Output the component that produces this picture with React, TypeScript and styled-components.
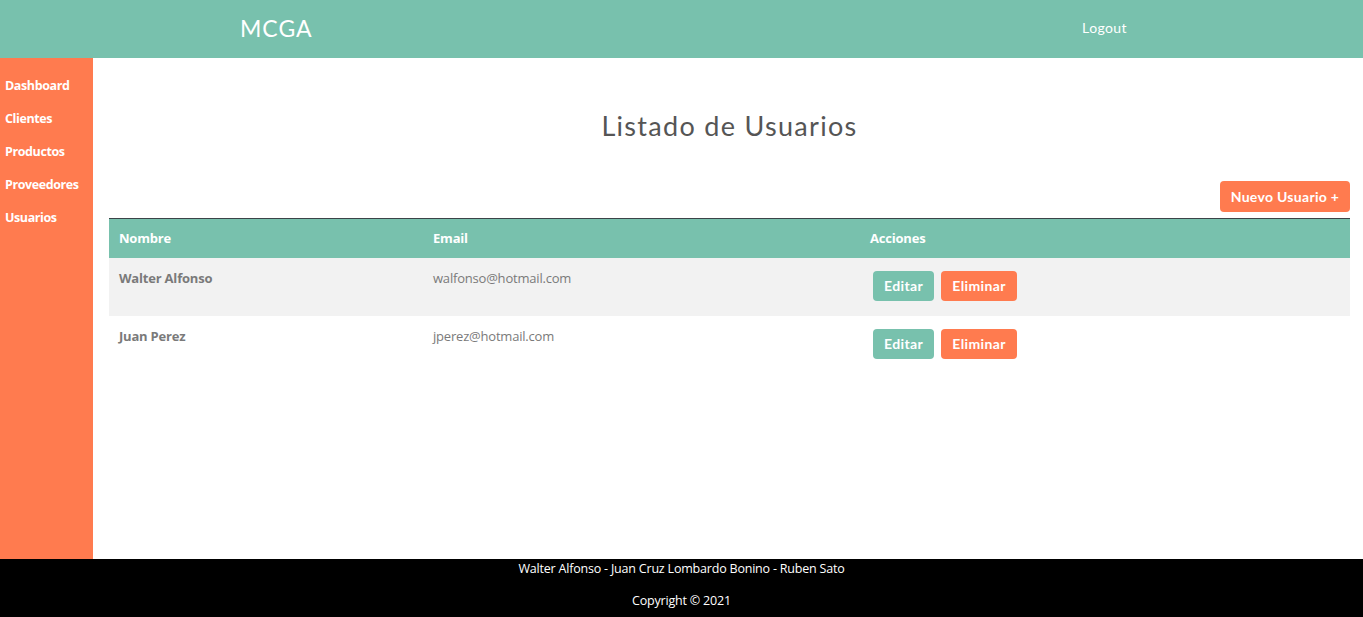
import React from "react";
import styled, { createGlobalStyle } from "styled-components";

const Global = createGlobalStyle`
  html, body { margin: 0; padding: 0; }
  body { font-family: "Open Sans", "Noto Sans", sans-serif; background: #fff; }
  * { box-sizing: border-box; }
`;

const TEAL = "#78c1ad";
const ORANGE = "#ff7b4f";

const Page = styled.div`
  display: flex;
  flex-direction: column;
  height: 617px;
`;

const Header = styled.header`
  height: 58px;
  background: ${TEAL};
  display: flex;
  align-items: center;
  flex-shrink: 0;
`;

const Brand = styled.div`
  font-family: "Lato", "Open Sans", sans-serif;
  font-size: 23px;
  color: #fff;
  margin-left: 240px;
  letter-spacing: 1px;
  margin-bottom: 2px;
`;

const Logout = styled.a`
  font-family: "Lato", "Open Sans", sans-serif;
  font-size: 14px;
  color: #fff;
  margin-left: auto;
  margin-right: 236px;
  letter-spacing: 0.4px;
  margin-bottom: 4px;
  cursor: pointer;
`;

const Body = styled.div`
  flex: 1;
  display: flex;
  min-height: 0;
`;

const Sidebar = styled.nav`
  width: 93px;
  background: ${ORANGE};
  padding-top: 18px;
  display: flex;
  flex-direction: column;
  gap: 13px;
  flex-shrink: 0;
`;

const NavItem = styled.a`
  color: #fff;
  font-weight: 700;
  font-size: 12.5px;
  line-height: 20px;
  padding-left: 5px;
  letter-spacing: -0.4px;
  cursor: pointer;
`;

const Main = styled.main`
  flex: 1;
  padding: 0 13px 0 16px;
`;

const Title = styled.h1`
  font-family: "Lato", "Open Sans", sans-serif;
  font-weight: 400;
  font-size: 27px;
  color: #555;
  text-align: center;
  margin: 0;
  padding-top: 48px;
  line-height: 40px;
  letter-spacing: 1.3px;
`;

const Toolbar = styled.div`
  display: flex;
  justify-content: flex-end;
  margin-top: 35px;
  margin-bottom: 6px;
`;

const Button = styled.button<{ $variant: "teal" | "orange" }>`
  font-family: "Lato", "Open Sans", sans-serif;
  font-weight: 700;
  font-size: 14px;
  color: #fff;
  background: ${(p) => (p.$variant === "teal" ? TEAL : ORANGE)};
  border: none;
  border-radius: 4px;
  height: 30px;
  padding: 0 11px;
  cursor: pointer;
  white-space: nowrap;
  letter-spacing: 0.4px;
`;

const NewButton = styled(Button)`
  height: 31px;
  padding: 0;
  width: 130px;
  letter-spacing: 0.3px;
`;

const Table = styled.table`
  width: 100%;
  border-collapse: collapse;
  border-top: 1px solid #3c4348;
  font-size: 13px;
`;

const Th = styled.th<{ $w: number }>`
  background: ${TEAL};
  color: #fff;
  text-align: left;
  font-weight: 700;
  height: 39px;
  padding: 0 10px;
  width: ${(p) => p.$w}px;
  letter-spacing: -0.2px;
`;

const Tr = styled.tr<{ $alt: boolean }>`
  background: ${(p) => (p.$alt ? "#f2f2f2" : "#fff")};
`;

const Td = styled.td<{ $bold?: boolean }>`
  vertical-align: top;
  padding: 10px 10px 12px;
  color: #7a7a7a;
  font-weight: ${(p) => (p.$bold ? 700 : 400)};
  line-height: 20px;
  height: 58px;
  letter-spacing: -0.2px;
`;

const Actions = styled.div`
  display: flex;
  gap: 7px;
  padding: 3px 0 0 3px;
`;

const Footer = styled.footer`
  height: 58px;
  background: #000;
  color: #fff;
  font-size: 12.5px;
  text-align: center;
  flex-shrink: 0;
  letter-spacing: -0.2px;
`;

const FooterLine = styled.p`
  margin: 0;
  line-height: 20px;
  & + & { margin-top: 12px; }
`;

const users = [
  { name: "Walter Alfonso", email: "walfonso@hotmail.com" },
  { name: "Juan Perez", email: "jperez@hotmail.com" },
];

export default function App() {
  return (
    <>
      <Global />
      <Page>
        <Header>
          <Brand>MCGA</Brand>
          <Logout>Logout</Logout>
        </Header>
        <Body>
          <Sidebar>
            {["Dashboard", "Clientes", "Productos", "Proveedores", "Usuarios"].map((n) => (
              <NavItem key={n}>{n}</NavItem>
            ))}
          </Sidebar>
          <Main>
            <Title>Listado de Usuarios</Title>
            <Toolbar>
              <NewButton $variant="orange">Nuevo Usuario +</NewButton>
            </Toolbar>
            <Table>
              <thead>
                <tr>
                  <Th $w={314}>Nombre</Th>
                  <Th $w={437}>Email</Th>
                  <Th $w={490}>Acciones</Th>
                </tr>
              </thead>
              <tbody>
                {users.map((u, i) => (
                  <Tr key={u.email} $alt={i % 2 === 0}>
                    <Td $bold>{u.name}</Td>
                    <Td>{u.email}</Td>
                    <Td>
                      <Actions>
                        <Button $variant="teal">Editar</Button>
                        <Button $variant="orange">Eliminar</Button>
                      </Actions>
                    </Td>
                  </Tr>
                ))}
              </tbody>
            </Table>
          </Main>
        </Body>
        <Footer>
          <FooterLine>Walter Alfonso - Juan Cruz Lombardo Bonino - Ruben Sato</FooterLine>
          <FooterLine>Copyright © 2021</FooterLine>
        </Footer>
      </Page>
    </>
  );
}
